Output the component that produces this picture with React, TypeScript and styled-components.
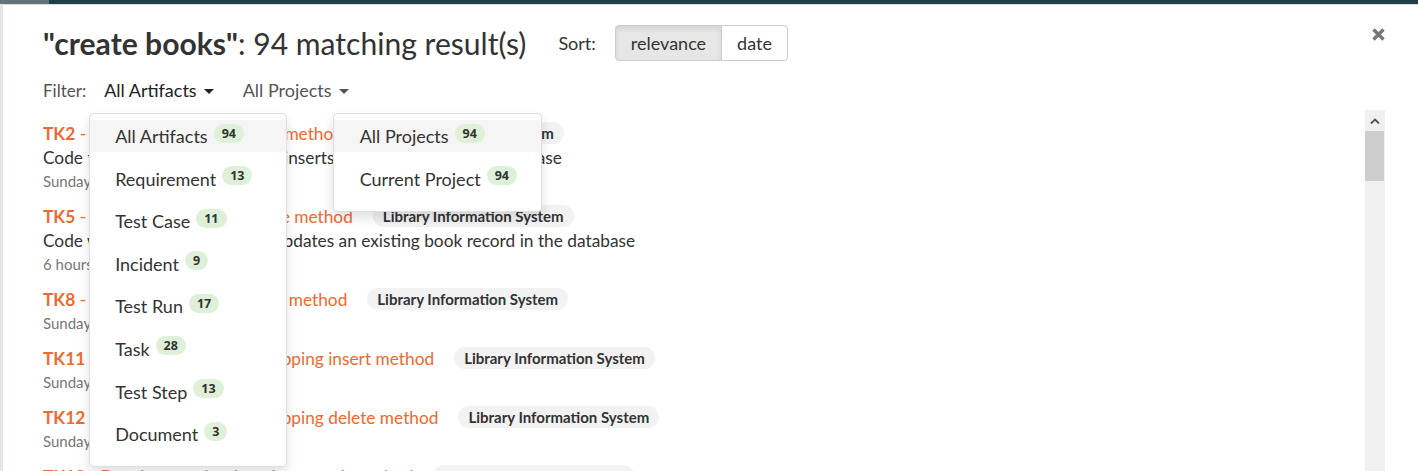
import React from 'react';
import styled, { createGlobalStyle } from 'styled-components';

const GlobalStyle = createGlobalStyle`
  html, body {
    margin: 0;
    height: 471px;
    overflow: hidden;
  }
  body {
    font-family: Lato, "Open Sans", sans-serif;
    color: #333;
  }
  #root {
    height: 100%;
  }
`;

const Page = styled.div`
  display: flex;
  flex-direction: column;
  height: 100%;
  background: #e8e8e8;
`;

const TopBar = styled.div`
  display: flex;
  height: 4px;
  flex-shrink: 0;
`;

const TopBarStub = styled.div`
  width: 49px;
  background: #637477;
`;

const TopBarMain = styled.div`
  flex: 1;
  background: #1c3f4a;
`;

const Stage = styled.div`
  display: flex;
  flex: 1;
  min-height: 0;
`;

const SideStrip = styled.div`
  width: 3px;
  background: #e4e6e6;
`;

const Modal = styled.div`
  position: relative;
  flex: 1;
  display: flex;
  flex-direction: column;
  min-height: 0;
  background: #fff;
  border-top: 1px solid #d8dcdc;
  padding: 20px 33px 0 40px;
`;

const Header = styled.div`
  display: flex;
  align-items: center;
  height: 36px;
`;

const Title = styled.h1`
  margin: 0;
  font-size: 30.1px;
  font-weight: 400;
  color: #333;
  line-height: 36px;
  white-space: nowrap;

  strong {
    font-weight: 700;
  }
`;

const SortLabel = styled.span`
  margin-left: 32px;
  font-size: 18px;
  color: #333;
`;

const ButtonGroup = styled.div`
  display: flex;
  margin-left: 19px;
`;

const SortButton = styled.button<{ $active?: boolean }>`
  height: 36px;
  padding: 0 15px;
  font-family: inherit;
  font-size: 18px;
  color: #333;
  border: 1px solid #ccc;
  background: ${(p) => (p.$active ? '#e6e6e6' : '#fff')};
  box-shadow: ${(p) => (p.$active ? 'inset 0 3px 5px rgba(0,0,0,0.08)' : 'none')};
  cursor: pointer;

  &:first-child {
    border-radius: 4px 0 0 4px;
  }
  &:last-child {
    border-radius: 0 4px 4px 0;
    margin-left: -1px;
  }
`;

const CloseButton = styled.button`
  margin-left: auto;
  align-self: flex-start;
  margin-top: 3px;
  padding: 0;
  border: 0;
  background: none;
  color: #777;
  display: flex;
  cursor: pointer;
`;

const FilterRow = styled.div`
  display: flex;
  align-items: center;
  height: 22px;
  margin-top: 18px;
  position: relative;
  z-index: 5;
`;

const FilterLabel = styled.span`
  font-size: 17px;
  color: #555;
  margin-right: 18px;
`;

const DropdownWrap = styled.div`
  position: relative;
  margin-right: 29px;
`;

const Toggle = styled.button<{ $open?: boolean }>`
  display: flex;
  align-items: center;
  gap: 7px;
  padding: 0;
  border: 0;
  background: none;
  font-family: inherit;
  font-size: 18px;
  line-height: 22px;
  color: ${(p) => (p.$open ? '#222' : '#555')};
  cursor: pointer;
`;

const Caret = styled.span`
  width: 0;
  height: 0;
  border-top: 5px solid currentColor;
  border-left: 5px solid transparent;
  border-right: 5px solid transparent;
  margin-top: 2px;
`;

const Menu = styled.ul<{ $left: number; $width: number }>`
  position: absolute;
  top: calc(100% + 12px);
  left: ${(p) => p.$left}px;
  width: ${(p) => p.$width}px;
  box-sizing: border-box;
  margin: 0;
  padding: 6px 0 16px;
  list-style: none;
  background: #fff;
  border: 1px solid rgba(0, 0, 0, 0.13);
  border-radius: 5px;
  box-shadow: 0 6px 12px rgba(0, 0, 0, 0.12);
  display: flex;
  flex-direction: column;
  gap: 10.6px;
`;

const MenuItem = styled.li<{ $active?: boolean; $indent: number }>`
  display: flex;
  align-items: center;
  height: 32px;
  padding-left: ${(p) => p.$indent}px;
  font-size: 18px;
  color: #333;
  background: ${(p) => (p.$active ? '#f5f5f5' : 'transparent')};
  white-space: nowrap;
`;

const CountBadge = styled.span`
  margin-left: 6px;
  margin-top: -6px;
  height: 19px;
  line-height: 19px;
  padding: 0 8px;
  border-radius: 10px;
  background: #dff0d8;
  color: #333;
  font-family: "Open Sans", sans-serif;
  font-size: 12.5px;
  font-weight: 700;
`;

const ListArea = styled.div`
  display: flex;
  flex: 1;
  min-height: 0;
  margin-top: 9px;
`;

const ResultList = styled.div`
  flex: 1;
  overflow: hidden;
  padding-top: 10px;
`;

const Result = styled.div`
  margin-bottom: 11px;
`;

const ResultTitle = styled.div`
  display: flex;
  align-items: center;
  gap: 20px;
  height: 26px;
  white-space: nowrap;
`;

const ResultLink = styled.a`
  font-size: 17.3px;
  color: #f0692c;
  text-decoration: none;

  strong {
    font-weight: 700;
  }
`;

const ProjectTag = styled.span`
  height: 22px;
  line-height: 22px;
  padding: 0 10px;
  border-radius: 11px;
  background: #f2f2f2;
  color: #333;
  font-size: 15px;
  font-weight: 700;
`;

const Description = styled.div`
  font-size: 17.3px;
  line-height: 24px;
  color: #333;
`;

const DateLine = styled.div`
  font-size: 15px;
  line-height: 22px;
  color: #777;
`;

const ScrollTrack = styled.div`
  width: 20px;
  background: #f0f0f0;
  display: flex;
  flex-direction: column;
`;

const ScrollArrow = styled.div`
  height: 21px;
  display: flex;
  align-items: center;
  justify-content: center;
  color: #505050;
`;

const ScrollThumb = styled.div`
  height: 50px;
  margin-right: 1px;
  background: #cdcdcd;
`;

const artifacts = [
  { name: 'All Artifacts', count: 94 },
  { name: 'Requirement', count: 13 },
  { name: 'Test Case', count: 11 },
  { name: 'Incident', count: 9 },
  { name: 'Test Run', count: 17 },
  { name: 'Task', count: 28 },
  { name: 'Test Step', count: 13 },
  { name: 'Document', count: 3 },
];

const projects = [
  { name: 'All Projects', count: 94 },
  { name: 'Current Project', count: 94 },
];

const results = [
  {
    key: 'TK2',
    name: 'Develop new book insert method',
    desc: 'Code that invokes the SQL that inserts a new book into the database',
    date: 'Sunday, March 24, 2024',
  },
  {
    key: 'TK5',
    name: 'Develop new book update method',
    desc: 'Code which calls the SQL that updates an existing book record in the database',
    date: '6 hours ago',
  },
  { key: 'TK8', name: 'Develop new book delete method', date: 'Sunday, March 24, 2024' },
  { key: 'TK11', name: 'Develop book series mapping insert method', date: 'Sunday, March 24, 2024' },
  { key: 'TK12', name: 'Develop book series mapping delete method', date: 'Sunday, March 24, 2024' },
  { key: 'TK13', name: 'Develop new book author search method', date: 'Sunday, March 24, 2024' },
  { key: 'TK14', name: 'Develop new book genre lookup method', date: 'Sunday, March 24, 2024' },
];

export default function App() {
  return (
    <>
      <GlobalStyle />
      <Page>
        <TopBar>
          <TopBarStub />
          <TopBarMain />
        </TopBar>
        <Stage>
          <SideStrip />
          <Modal>
            <Header>
              <Title>
                <strong>"create books"</strong>: 94 matching result(s)
              </Title>
              <SortLabel>Sort:</SortLabel>
              <ButtonGroup>
                <SortButton $active>relevance</SortButton>
                <SortButton>date</SortButton>
              </ButtonGroup>
              <CloseButton aria-label="Close">
                <svg width="13" height="13" viewBox="0 0 13 13">
                  <path d="M1.5 1.5 L11.5 11.5 M11.5 1.5 L1.5 11.5" stroke="currentColor" strokeWidth="3.4" />
                </svg>
              </CloseButton>
            </Header>

            <FilterRow>
              <FilterLabel>Filter:</FilterLabel>
              <DropdownWrap>
                <Toggle $open>
                  All Artifacts <Caret />
                </Toggle>
                <Menu $left={-15} $width={198}>
                  {artifacts.map((a, i) => (
                    <MenuItem key={a.name} $active={i === 0} $indent={25}>
                      {a.name}
                      <CountBadge>{a.count}</CountBadge>
                    </MenuItem>
                  ))}
                </Menu>
              </DropdownWrap>
              <DropdownWrap>
                <Toggle>
                  All Projects <Caret />
                </Toggle>
                <Menu $left={90} $width={209}>
                  {projects.map((p, i) => (
                    <MenuItem key={p.name} $active={i === 0} $indent={26}>
                      {p.name}
                      <CountBadge>{p.count}</CountBadge>
                    </MenuItem>
                  ))}
                </Menu>
              </DropdownWrap>
            </FilterRow>

            <ListArea>
              <ResultList>
                {results.map((r) => (
                  <Result key={r.key}>
                    <ResultTitle>
                      <ResultLink href="#">
                        <strong>{r.key}</strong> - {r.name}
                      </ResultLink>
                      <ProjectTag>Library Information System</ProjectTag>
                    </ResultTitle>
                    {r.desc && <Description>{r.desc}</Description>}
                    <DateLine>{r.date}</DateLine>
                  </Result>
                ))}
              </ResultList>
              <ScrollTrack>
                <ScrollArrow>
                  <svg width="10" height="6" viewBox="0 0 10 6">
                    <path d="M1 5.5 L5 1.5 L9 5.5" fill="none" stroke="currentColor" strokeWidth="1.8" />
                  </svg>
                </ScrollArrow>
                <ScrollThumb />
              </ScrollTrack>
            </ListArea>
          </Modal>
        </Stage>
      </Page>
    </>
  );
}
